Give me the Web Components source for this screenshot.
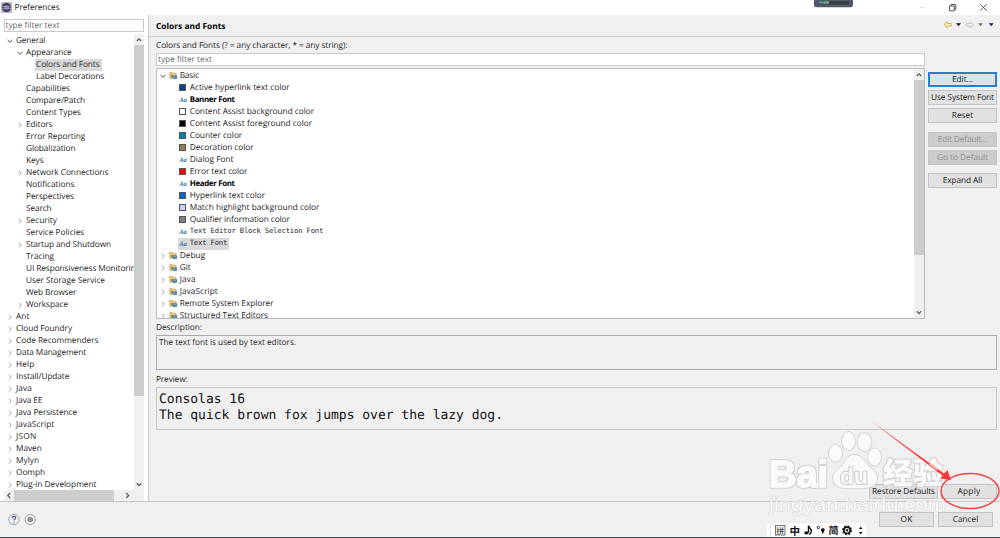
<!DOCTYPE html>
<html lang="en">
<head>
<meta charset="utf-8">
<title>Preferences</title>
<style>
    html, body { margin: 0; width: 1000px; height: 538px; overflow: hidden; }
    body { background: #fff; }
</style>
</head>
<body>
<preferences-window></preferences-window>

<script>
// Text with an optional target width, reached by adjusting the letter spacing
class UiText extends HTMLElement {
    connectedCallback() {
        if (this.shadowRoot) return;
        this.attachShadow({ mode: 'open' });
        this.shadowRoot.innerHTML = `
            <style>
                :host { display: block; flex: none; }
                span { display: inline-block; white-space: pre; vertical-align: top; }
            </style>
            <span><slot></slot></span>
        `;
        const width = parseFloat(this.getAttribute('w'));
        if (width) {
            const span = this.shadowRoot.querySelector('span');
            const count = this.textContent.length;
            const natural = span.getBoundingClientRect().width;
            span.style.letterSpacing = (width - natural) / count + 'px';
        }
    }
}
customElements.define('ui-text', UiText);

class UiButton extends HTMLElement {
    connectedCallback() {
        if (this.shadowRoot) return;
        this.attachShadow({ mode: 'open' });
        this.shadowRoot.innerHTML = `
            <style>
                :host {
                    display: flex;
                    align-items: center;
                    justify-content: center;
                    box-sizing: border-box;
                    height: 15px;
                    padding-top: 1px;
                    background: #e1e1e1;
                    border: 1px solid #c3c3c3;
                    color: #222;
                }
                :host([focused]) { border: 2px solid #2680cc; }
                :host([disabled]) { background: #cccccc; border-color: #c6c6c6; color: #929292; }
            </style>
            <ui-text w="${this.getAttribute('w')}">${this.getAttribute('label')}</ui-text>
        `;
    }
}
customElements.define('ui-button', UiButton);

class FilterField extends HTMLElement {
    connectedCallback() {
        if (this.shadowRoot) return;
        this.attachShadow({ mode: 'open' });
        this.shadowRoot.innerHTML = `
            <style>
                :host {
                    display: flex;
                    align-items: center;
                    box-sizing: border-box;
                    height: 13px;
                    padding: 1px 0 0 1px;
                    background: #fff;
                    border: 1px solid #c9cacc;
                    color: #6d6d6d;
                }
            </style>
            <ui-text w="54">type filter text</ui-text>
        `;
    }
}
customElements.define('filter-field', FilterField);

class ScrollBar extends HTMLElement {
    connectedCallback() {
        if (this.shadowRoot) return;
        this.attachShadow({ mode: 'open' });
        this.shadowRoot.innerHTML = `
            <style>
                :host { display: flex; flex-direction: column; flex: none; width: 10px; background: #f0f0f0; }
                :host([horizontal]) { flex-direction: row; width: auto; height: 11px; }
                svg { flex: none; width: 10px; height: 11px; fill: none; stroke: #606060; stroke-width: 1.3; }
                .track { flex: 1; display: flex; flex-direction: inherit; }
                .thumb { background: #cdcdcd; flex: 0 0 ${this.getAttribute('thumb')}px; }
            </style>
            ${this.hasAttribute('horizontal') ? `
            <svg viewBox="0 0 10 11"><path d="M6.2 3 3.7 5.5 6.2 8"/></svg>
            <div class="track"><div class="thumb"></div></div>
            <svg viewBox="0 0 10 11"><path d="M3.2 3 5.7 5.5 3.2 8"/></svg>` : `
            <svg viewBox="0 0 10 11"><path d="M2.8 7 5 4.8 7.2 7"/></svg>
            <div class="track"><div class="thumb"></div></div>
            <svg viewBox="0 0 10 11"><path d="M2.8 4.3 5 6.5 7.2 4.3"/></svg>`}
        `;
    }
}
customElements.define('scroll-bar', ScrollBar);

const FOLDER = `
    <svg width="9" height="9" viewBox="0 0 9 9">
        <path d="M.8 7.2V1.6H3.4l.7.8h3v4.8z" fill="#f0ce86" stroke="#c99b4b" stroke-width=".7"/>
        <path d="M1.8 5.2 3.2 3.2 4.2 5.2z" fill="#a5504a"/>
        <rect x="2.4" y="4.8" width="2.2" height="2" fill="#68904e"/>
        <circle cx="6.2" cy="6.1" r="2.2" fill="#3f80b8"/>
        <path d="M5 5.5h1.3M6.3 6.9h1.2" stroke="#d5e8f5" stroke-width=".6"/>
    </svg>`;

const FONT_ICON = `
    <svg width="9" height="9" viewBox="0 0 9 9">
        <text x=".2" y="7.1" font-family="Liberation Serif, serif" font-size="7" font-style="italic"
            font-weight="bold" fill="#39709f" textLength="7.6" lengthAdjust="spacingAndGlyphs">Aa</text>
    </svg>`;

class TreeItem extends HTMLElement {
    connectedCallback() {
        if (this.shadowRoot) return;
        const level = Number(this.getAttribute('level') || 0);
        const state = this.getAttribute('state');
        const icon = this.getAttribute('icon');
        let iconHtml = '';
        if (icon === 'folder') iconHtml = FOLDER;
        else if (icon === 'font') iconHtml = FONT_ICON;
        else if (icon) iconHtml = `<i style="background:${icon}"></i>`;

        this.attachShadow({ mode: 'open' });
        this.shadowRoot.innerHTML = `
            <style>
                :host { display: flex; flex: none; height: 12px; padding-left: ${level * 10}px; }
                .arrow { flex: none; width: 12px; height: 12px; fill: none; stroke: #a3a3a3; stroke-width: 1; }
                .arrow.open { stroke: #4c4c4c; }
                .body { display: flex; align-items: center; flex: none; height: 12px; margin-left: -1.5px; padding: 0 2px 0 1.5px; }
                :host([selected]) .body { background: #d9d9d9; }
                .icon { display: flex; align-items: center; width: 10.7px; flex: none; }
                i { box-sizing: border-box; width: 7px; height: 7px; border: 1px solid #555; }
                :host([bold]) ui-text { font-weight: bold; font-size: 7.9px; color: #000; }
                :host([mono]) ui-text { font-family: "DejaVu Sans Mono", monospace; font-size: 7.2px; margin-top: -1px; }
            </style>
            <svg class="arrow ${state || ''}" viewBox="0 0 12 12">
                ${state === 'open' ? '<path d="M3.6 5 6 7.3 8.4 5"/>' : ''}
                ${state === 'closed' ? '<path d="M5 3.8 7.2 6.2 5 8.6"/>' : ''}
            </svg>
            <div class="body">
                ${icon ? `<span class="icon">${iconHtml}</span>` : ''}
                <ui-text w="${this.getAttribute('w')}">${this.getAttribute('label')}</ui-text>
            </div>
        `;
    }
}
customElements.define('tree-item', TreeItem);

// [label, level, state, width]
const PAGES = [
    ['General', 0, 'open', 29.3],
    ['Appearance', 1, 'open', 45.7],
    ['Colors and Fonts', 2, '', 63.5],
    ['Label Decorations', 2, '', 68],
    ['Capabilities', 1, '', 44],
    ['Compare/Patch', 1, '', 59],
    ['Content Types', 1, '', 55],
    ['Editors', 1, 'closed', 26.5],
    ['Error Reporting', 1, '', 59.3],
    ['Globalization', 1, '', 49.5],
    ['Keys', 1, '', 17.5],
    ['Network Connections', 1, 'closed', 82.3],
    ['Notifications', 1, '', 48.5],
    ['Perspectives', 1, '', 48],
    ['Search', 1, '', 25.5],
    ['Security', 1, 'closed', 31],
    ['Service Policies', 1, '', 58.3],
    ['Startup and Shutdown', 1, 'closed', 85],
    ['Tracing', 1, '', 28],
    ['UI Responsiveness Monitoring', 1, '', 114],
    ['User Storage Service', 1, '', 79],
    ['Web Browser', 1, '', 50.3],
    ['Workspace', 1, 'closed', 42],
    ['Ant', 0, 'closed', 13.5],
    ['Cloud Foundry', 0, 'closed', 56],
    ['Code Recommenders', 0, 'closed', 82.5],
    ['Data Management', 0, 'closed', 70],
    ['Help', 0, 'closed', 18.3],
    ['Install/Update', 0, 'closed', 53.3],
    ['Java', 0, 'closed', 16],
    ['Java EE', 0, 'closed', 26.3],
    ['Java Persistence', 0, 'closed', 61],
    ['JavaScript', 0, 'closed', 38.3],
    ['JSON', 0, 'closed', 20.5],
    ['Maven', 0, 'closed', 25.8],
    ['Mylyn', 0, 'closed', 23.2],
    ['Oomph', 0, 'closed', 29],
    ['Plug-in Development', 0, 'closed', 80.5]
];

// [label, level, state, width, icon, style]
const DEFINITIONS = [
    ['Basic', 0, 'open', 19, 'folder', ''],
    ['Active hyperlink text color', 1, '', 100, '#00438c', ''],
    ['Banner Font', 1, '', 45, 'font', 'bold'],
    ['Content Assist background color', 1, '', 124.5, '#ffffff', ''],
    ['Content Assist foreground color', 1, '', 122.5, '#000000', ''],
    ['Counter color', 1, '', 52.5, '#007fae', ''],
    ['Decoration color', 1, '', 64, '#957d47', ''],
    ['Dialog Font', 1, '', 43.8, 'font', ''],
    ['Error text color', 1, '', 57.7, '#ff0000', ''],
    ['Header Font', 1, '', 45, 'font', 'bold'],
    ['Hyperlink text color', 1, '', 75.5, '#0066cc', ''],
    ['Match highlight background color', 1, '', 129.8, '#d0ccff', ''],
    ['Qualifier information color', 1, '', 100, '#808080', ''],
    ['Text Editor Block Selection Font', 1, '', 133.5, 'font', 'mono'],
    ['Text Font', 1, '', 37.5, 'font', 'mono selected'],
    ['Debug', 0, 'closed', 25.5, 'folder', ''],
    ['Git', 0, 'closed', 11, 'folder', ''],
    ['Java', 0, 'closed', 16, 'folder', ''],
    ['JavaScript', 0, 'closed', 38.2, 'folder', ''],
    ['Remote System Explorer', 0, 'closed', 93.8, 'folder', ''],
    ['Structured Text Editors', 0, 'closed', 88.3, 'folder', '']
];

class TitleBar extends HTMLElement {
    connectedCallback() {
        this.attachShadow({ mode: 'open' });
        this.shadowRoot.innerHTML = `
            <style>
                :host { display: flex; height: 15px; align-items: center; background: #fff; color: #222; position: relative; flex: none; }
                .logo { margin: 0 2.5px 0 1px; }
                .controls { margin-left: auto; }
                .gauge { position: absolute; left: 814px; top: 0; }
            </style>
            <svg class="logo" width="11" height="11" viewBox="0 0 11 11">
                <rect width="11" height="11" rx="1.5" fill="#b8b4c0"/>
                <circle cx="5.5" cy="5.5" r="4.5" fill="#3a3158"/>
                <circle cx="5.5" cy="5.5" r="2.8" fill="#71679a"/>
                <path d="M1.5 4.6h8M1.2 6.3h8.6" stroke="#dcd8e8" stroke-width=".6"/>
            </svg>
            <ui-text w="45">Preferences</ui-text>
            <svg class="gauge" width="39" height="8" viewBox="0 0 39 8">
                <path d="M0 0h39v5q0 2.3-2.3 2.3H2.3Q0 7.3 0 5z" fill="#535765"/>
                <path d="M4 1.3h31v3H4z" fill="#353b45"/>
                <path d="M4.5 1.5H15v2H4.5z" fill="#58a59a"/>
                <path d="M10 1.5h5v2h-5z" fill="#70ad76"/>
            </svg>
            <svg class="controls" width="100" height="15" viewBox="900 0 100 15" fill="none" stroke="#444" stroke-width=".9">
                <path d="M919.5 7.3h6" stroke="#dedede"/>
                <path d="M949.5 6h4.8v4.8h-4.8zM951 6V4.5h4.8v4.8h-1.5"/>
                <path d="M980.2 4.2l6.4 6.4M986.6 4.2l-6.4 6.4"/>
            </svg>
        `;
    }
}
customElements.define('title-bar', TitleBar);

class PageTree extends HTMLElement {
    connectedCallback() {
        this.attachShadow({ mode: 'open' });
        this.shadowRoot.innerHTML = `
            <style>
                :host { display: flex; flex-direction: column; box-sizing: border-box; width: 148px; flex: none; padding: 4px 4.5px 0 3.5px; background: #fff; }
                .tree { display: flex; margin-top: 2px; height: 456px; }
                .rows { flex: 1; min-width: 0; overflow: hidden; padding: .6px 0 0 .5px; }
                .bottom { display: flex; background: #f0f0f0; }
                scroll-bar[horizontal] { width: 129px; height: 11px; }
            </style>
            <filter-field></filter-field>
            <div class="tree">
                <div class="rows">
                    ${PAGES.map(([label, level, state, w]) =>
                        `<tree-item label="${label}" level="${level}" state="${state}" w="${w}" ${label === 'Colors and Fonts' ? 'selected' : ''}></tree-item>`).join('')}
                </div>
                <scroll-bar thumb="351"></scroll-bar>
            </div>
            <div class="bottom">
                <scroll-bar horizontal thumb="100"></scroll-bar>
            </div>
        `;
    }
}
customElements.define('page-tree', PageTree);

class FontsPage extends HTMLElement {
    connectedCallback() {
        this.attachShadow({ mode: 'open' });
        this.shadowRoot.innerHTML = `
            <style>
                :host { display: flex; flex-direction: column; flex: 1; min-width: 0; border-left: 1px solid #c8c8c8; background: #f0f0f0; }
                header { display: flex; align-items: center; height: 21px; padding-left: 7px; border-bottom: 1px solid #cccccf; }
                header ui-text { font-weight: bold; color: #000; padding-top: 3px; }
                header svg { margin-left: auto; }
                main { display: flex; flex-direction: column; padding: 0 3px 0 7px; }
                .caption { display: flex; align-items: center; box-sizing: border-box; height: 16px; padding-top: 2px; }
                .columns { display: flex; gap: 3px; }
                .left { width: 769px; flex: none; }
                .tree { display: flex; box-sizing: border-box; height: 251px; margin-top: 2px; border: 1px solid #b9bbc0; background: #fff; overflow: hidden; }
                .rows { flex: 1; padding-top: .5px; overflow: hidden; }
                .buttons { flex: 1; display: grid; grid-auto-rows: 15px; align-content: start; gap: 3.2px; padding-top: 35px; }
                .gap { margin-top: 5px; margin-bottom: -5px; }
                .gap2 { margin-top: 10px; margin-bottom: -10px; }
                .box { box-sizing: border-box; border: 1px solid #acacac; padding-left: 2px; }
                .description { height: 35px; padding-top: .5px; }
                .preview { height: 43px; border-color: #c8c8c8; font: 13px/16.3px "DejaVu Sans Mono", monospace; color: #111; padding-top: 3.5px; }
                .before-preview { height: 17px; padding-top: 3px; }
                footer { display: flex; justify-content: flex-end; gap: 3px; margin-top: 54px; }
                .restore { width: 69px; }
                .apply { width: 56px; }
            </style>
            <header>
                <ui-text w="69.5">Colors and Fonts</ui-text>
                <svg width="60" height="12" viewBox="940 0 60 12">
                    <path d="M944 4.8 947.3 2V3.6h4V6h-4v1.6z" fill="#fff3c8" stroke="#d9a94a" stroke-width=".9"/>
                    <path d="M956 3.3h5L958.5 6.2z" fill="#111"/>
                    <path d="M973.5 4.8 970.2 2V3.6h-4V6h4v1.6z" fill="#f4f4f4" stroke="#c2c2c2" stroke-width=".9"/>
                    <path d="M978 3.3h5L980.5 6.2z" fill="#777"/>
                    <path d="M988.7 3.3h5L991.2 6.2z" fill="#3b1d5c"/>
                </svg>
            </header>
            <main>
                <div class="columns">
                    <div class="left">
                        <div class="caption"><ui-text w="191.5">Colors and Fonts (? = any character, * = any string):</ui-text></div>
                        <filter-field></filter-field>
                        <div class="tree">
                            <div class="rows">
                                ${DEFINITIONS.map(([label, level, state, w, icon, style]) =>
                                    `<tree-item label="${label}" level="${level}" state="${state}" w="${w}" icon="${icon}" ${style}></tree-item>`).join('')}
                            </div>
                            <scroll-bar thumb="175"></scroll-bar>
                        </div>
                    </div>
                    <div class="buttons">
                        <ui-button label="Edit..." w="21" focused></ui-button>
                        <ui-button label="Use System Font" w="63"></ui-button>
                        <ui-button label="Reset" w="21.5"></ui-button>
                        <ui-button class="gap" label="Edit Default..." w="50" disabled></ui-button>
                        <ui-button class="gap" label="Go to Default" w="51" disabled></ui-button>
                        <ui-button class="gap2" label="Expand All" w="39.5"></ui-button>
                    </div>
                </div>
                <div class="caption"><ui-text w="46">Description:</ui-text></div>
                <div class="box description"><ui-text w="137">The text font is used by text editors.</ui-text></div>
                <div class="caption before-preview"><ui-text w="31.5">Preview:</ui-text></div>
                <div class="box preview">
                    <ui-text w="86">Consolas 16</ui-text>
                    <ui-text w="344">The quick brown fox jumps over the lazy dog.</ui-text>
                </div>
                <footer>
                    <ui-button class="restore" label="Restore Defaults" w="63"></ui-button>
                    <ui-button class="apply" label="Apply" w="23"></ui-button>
                </footer>
            </main>
        `;
    }
}
customElements.define('fonts-page', FontsPage);

class DialogFooter extends HTMLElement {
    connectedCallback() {
        this.attachShadow({ mode: 'open' });
        this.shadowRoot.innerHTML = `
            <style>
                :host { display: flex; box-sizing: border-box; align-items: center; gap: 4px; height: 37px; flex: none; padding: 0 7px 0 8px; border-top: 1px solid #c6c6c6; border-bottom: 1.5px solid #43545a; background: #f0f0f0; }
                svg { margin-right: auto; }
                ui-button { width: 55px; }
            </style>
            <svg width="30" height="13" viewBox="0 0 30 13" fill="none">
                <circle cx="6" cy="6.5" r="5.1" fill="#f7f9fc" stroke="#8791a8" stroke-width=".9"/>
                <path d="M4.2 5.1q.1-1.7 1.9-1.7 1.7 0 1.7 1.4 0 .9-1 1.4-.8.4-.8 1.2M6 8.7v1.1" stroke="#46567c" stroke-width="1.2"/>
                <circle cx="22.2" cy="6.5" r="5.1" fill="#f4f4f4" stroke="#8c93a3" stroke-width=".9"/>
                <circle cx="22.2" cy="6.5" r="2.8" fill="#8c8c8c"/>
                <path d="M20.4 5.4h3.6M20.4 7.5h3.6" stroke="#aaa" stroke-width=".6"/>
            </svg>
            <ui-button label="OK" w="12"></ui-button>
            <ui-button label="Cancel" w="25.5"></ui-button>
        `;
    }
}
customElements.define('dialog-footer', DialogFooter);

// Watermark, annotation and input method bar drawn over the dialog
class PageOverlay extends HTMLElement {
    connectedCallback() {
        this.attachShadow({ mode: 'open' });
        this.shadowRoot.innerHTML = `
            <style>
                :host { position: absolute; left: 750px; top: 400px; width: 250px; height: 138px; pointer-events: none; }
                svg { display: block; }
                .mark { fill: #fcfcfc; stroke: #d2d2d2; stroke-width: 2; paint-order: stroke; stroke-linejoin: round; opacity: .85; }
                .mark .name { stroke: #fcfcfc; stroke-width: 1.6; paint-order: normal; }
                .mark .edge { stroke: #d2d2d2; stroke-width: 3.4; }
                .mark .du { fill: #fafafa; stroke: #cacaca; stroke-width: 2.2; }
                .mark .url { stroke-width: 1.2; opacity: .8; }
            </style>
            <svg width="250" height="138" viewBox="750 400 250 138">
                <defs>
                    <filter id="edge" x="-5%" y="-10%" width="110%" height="120%">
                        <feMorphology in="SourceAlpha" operator="dilate" radius=".8"/>
                        <feComponentTransfer result="wide"><feFuncA type="linear" slope="1"/></feComponentTransfer>
                        <feFlood flood-color="#d0d0d0"/>
                        <feComposite in2="wide" operator="in"/>
                        <feMerge><feMergeNode/><feMergeNode in="SourceGraphic"/></feMerge>
                    </filter>
                </defs>
                <g class="mark" font-family="Liberation Sans, sans-serif">
                    <text class="name" filter="url(#edge)" x="769" y="486.5" font-size="38" font-weight="bold" textLength="59" lengthAdjust="spacingAndGlyphs">Bai</text>
                    <ellipse cx="835.5" cy="453.5" rx="6.5" ry="8.5"/>
                    <ellipse cx="848.5" cy="441" rx="6.5" ry="9"/>
                    <ellipse cx="864.5" cy="442" rx="6.8" ry="9"/>
                    <ellipse cx="874.5" cy="457" rx="6.5" ry="8.5"/>
                    <path d="M854.5 455c8 0 10 7 15 12 6 5 9 8 7 14-3 8-12 7-22 7s-19 1-21-7c-2-6 3-11 8-15 4-4 6-11 13-11z"/>
                    <text class="du" x="840" y="483.5" font-size="23" font-weight="bold" textLength="28" lengthAdjust="spacingAndGlyphs">du</text>
                    <text class="name" filter="url(#edge)" x="883" y="483.5" font-family="Noto Sans CJK SC, sans-serif" font-weight="bold" font-size="30" textLength="60" lengthAdjust="spacingAndGlyphs" style="stroke-width:.6">经验</text>
                    <text class="url" x="769" y="510.5" font-size="20" textLength="177" lengthAdjust="spacingAndGlyphs">jingyan.baidu.com</text>
                </g>
                <path d="M871.7 421.5 944 473.5 947.5 470 951 480.2 940.5 478.5 942.5 475.5z" fill="#f83a3a"/>
                <path d="M929.5 463.5 937.5 469.5" stroke="#ffb8b8" stroke-width="2"/>
                <ellipse cx="970" cy="491" rx="29" ry="17.5" fill="none" stroke="#f34444" stroke-width="1.5"/>
                <path d="M767 523.5h99V537h-99z" fill="#fff"/>
                <path d="M770.3 524.5v12" stroke="#aaa" stroke-width=".8" stroke-dasharray="1 1.2"/>
                <rect x="775.5" y="525.5" width="9.5" height="9.5" fill="#f5f5f5" stroke="#555" stroke-width=".8"/>
                <g font-family="Noto Sans CJK SC, sans-serif" fill="#111">
                    <text x="776.2" y="533.5" font-size="8">拼</text>
                    <text x="789.5" y="534.5" font-size="10.5" font-weight="bold">中</text>
                    <text x="828.5" y="534.2" font-size="10" font-weight="bold">简</text>
                </g>
                <path d="M808.5 525.5v7M808.5 525.5c0 2.5 3.5 2.5 2.7 6.5-.3 1-1 2-2 2.3" fill="none" stroke="#111" stroke-width="1.4"/>
                <ellipse cx="806.5" cy="532.8" rx="2.3" ry="1.6" fill="#111"/>
                <circle cx="818.3" cy="527.5" r="1.2" fill="none" stroke="#111" stroke-width=".9"/>
                <path d="M821 530.2a1.8 1.8 0 1 1 3.4.6q-.4 2.8-3.2 3.7 1.300-1.200 1-2.500-1.100-.5-1.200-1.800z" fill="#111"/>
                <circle cx="847" cy="530.3" r="3.2" fill="none" stroke="#111" stroke-width="1.7"/>
                <circle cx="847" cy="530.3" r="4.4" fill="none" stroke="#111" stroke-width="1.2" stroke-dasharray="1.73 1.73"/>
                <circle cx="847" cy="530.3" r="1.2" fill="#111"/>
                <path d="M858.8 529 860.7 526.8 862.6 529zM858.8 532 860.7 534.2 862.6 532z" fill="#111"/>
            </svg>
        `;
    }
}
customElements.define('page-overlay', PageOverlay);

class PreferencesWindow extends HTMLElement {
    connectedCallback() {
        this.attachShadow({ mode: 'open' });
        this.shadowRoot.innerHTML = `
            <style>
                :host {
                    display: flex;
                    flex-direction: column;
                    position: relative;
                    width: 1000px;
                    height: 538px;
                    overflow: hidden;
                    background: #fff;
                    color: #262626;
                    font: 8.3px/12px "Open Sans", "Noto Sans", sans-serif;
                    text-rendering: geometricPrecision;
                }
                .content { display: flex; flex: 1; min-height: 0; }
            </style>
            <title-bar></title-bar>
            <div class="content">
                <page-tree></page-tree>
                <fonts-page></fonts-page>
            </div>
            <dialog-footer></dialog-footer>
            <page-overlay></page-overlay>
        `;
    }
}
customElements.define('preferences-window', PreferencesWindow);
</script>
</body>
</html>
